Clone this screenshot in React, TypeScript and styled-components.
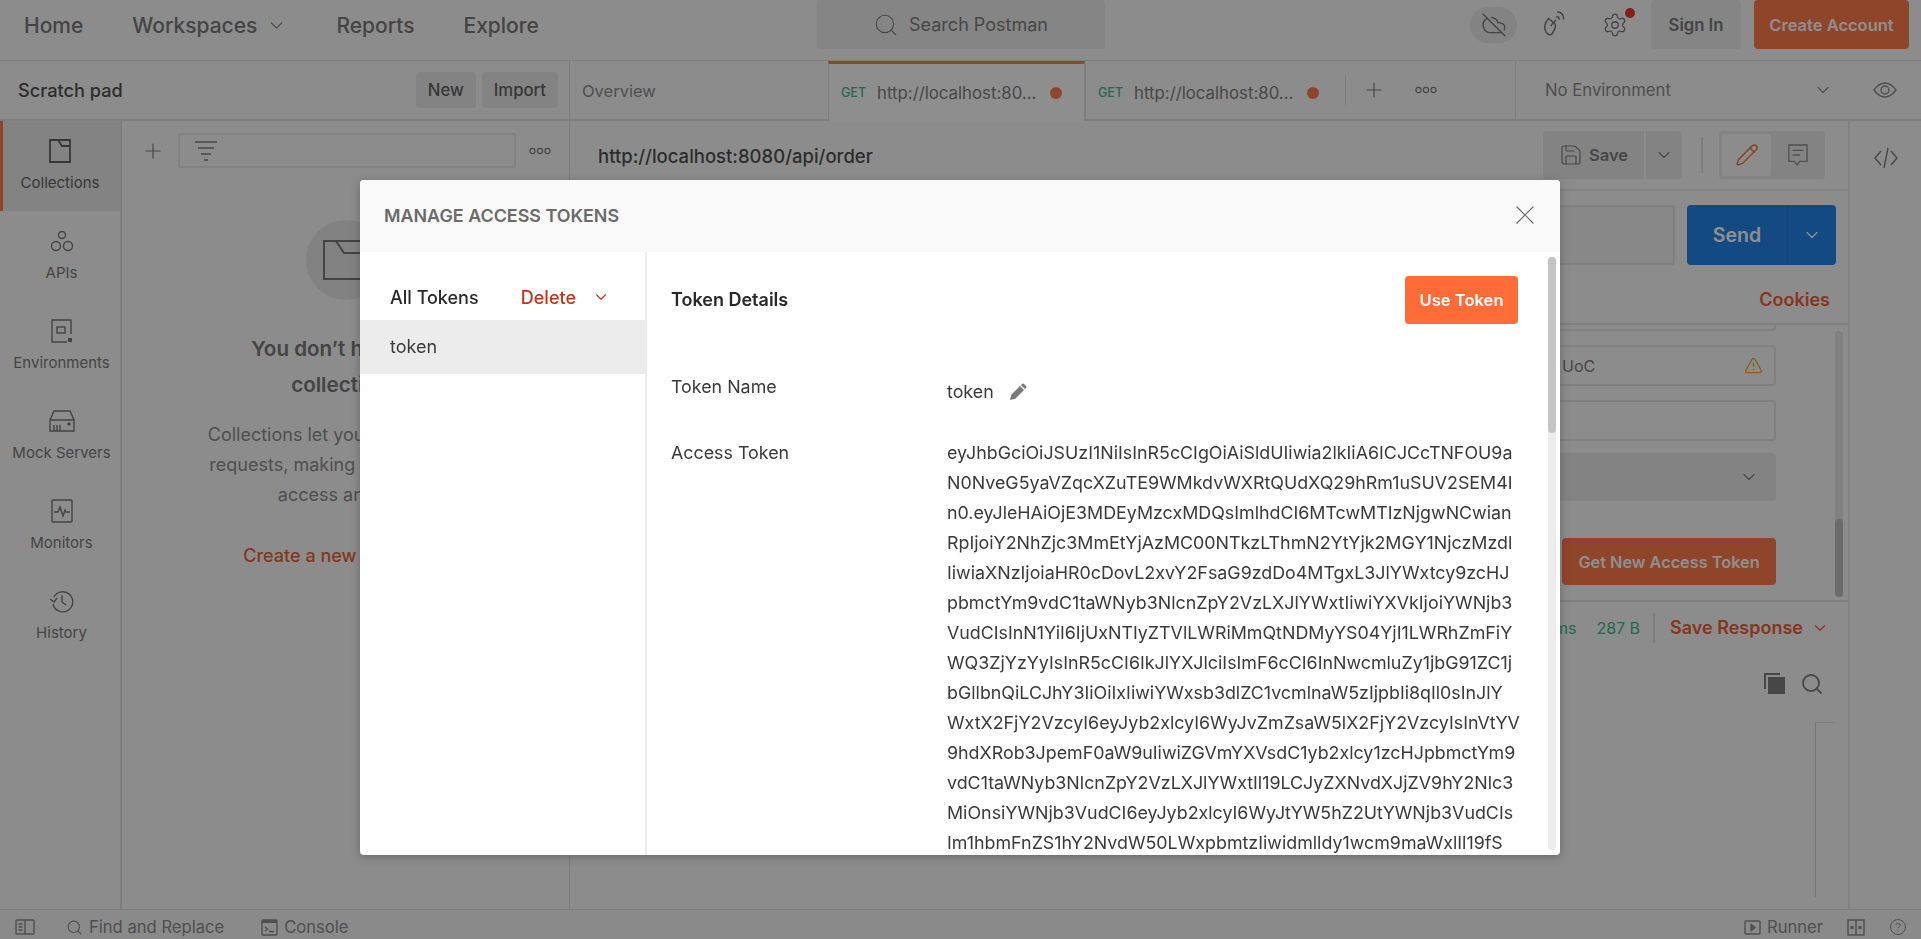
import React from 'react';
import styled, { createGlobalStyle } from 'styled-components';
import { ChevronDown, Plus, Search, X, CloudOff, Settings, Save, Pencil, TriangleAlert, CircleHelp } from 'lucide-react';

const GlobalStyle = createGlobalStyle`
  * { box-sizing: border-box; }
  html, body { margin: 0; padding: 0; height: 100%; overflow: hidden; }
  body { font-family: Inter, "Open Sans", sans-serif; background: #fafafa; color: #3a3a3a; }
`;

const TOKEN_LINES = [
  'eyJhbGciOiJSUzI1NiIsInR5cCIgOiAiSldUIiwia2lkIiA6ICJCcTNFOU9a',
  'N0NveG5yaVZqcXZuTE9WMkdvWXRtQUdXQ29hRm1uSUV2SEM4I',
  'n0.eyJleHAiOjE3MDEyMzcxMDQsImlhdCI6MTcwMTIzNjgwNCwian',
  'RpIjoiY2NhZjc3MmEtYjAzMC00NTkzLThmN2YtYjk2MGY1NjczMzdl',
  'IiwiaXNzIjoiaHR0cDovL2xvY2FsaG9zdDo4MTgxL3JlYWxtcy9zcHJ',
  'pbmctYm9vdC1taWNyb3NlcnZpY2VzLXJlYWxtIiwiYXVkIjoiYWNjb3',
  'VudCIsInN1YiI6IjUxNTIyZTVlLWRiMmQtNDMyYS04YjI1LWRhZmFiY',
  'WQ3ZjYzYyIsInR5cCI6IkJlYXJlciIsImF6cCI6InNwcmluZy1jbG91ZC1j',
  'bGllbnQiLCJhY3IiOiIxIiwiYWxsb3dlZC1vcmlnaW5zIjpbIi8qIl0sInJlY',
  'WxtX2FjY2VzcyI6eyJyb2xlcyI6WyJvZmZsaW5lX2FjY2VzcyIsInVtYV',
  '9hdXRob3JpemF0aW9uIiwiZGVmYXVsdC1yb2xlcy1zcHJpbmctYm9',
  'vdC1taWNyb3NlcnZpY2VzLXJlYWxtIl19LCJyZXNvdXJjZV9hY2Nlc3',
  'MiOnsiYWNjb3VudCI6eyJyb2xlcyI6WyJtYW5hZ2UtYWNjb3VudCIs',
  'Im1hbmFnZS1hY2NvdW50LWxpbmtzIiwidmlldy1wcm9maWxlIl19fS',
];

const Shell = styled.div`
  display: flex;
  flex-direction: column;
  height: 100vh;
  overflow: hidden;
`;

const TopBar = styled.header`
  height: 61px;
  flex: none;
  display: grid;
  grid-template-columns: 1fr 288px 1fr;
  border-bottom: 1px solid #dedede;
  background: #fbfbfb;
`;

const Nav = styled.nav`
  display: flex;
  align-items: center;
  gap: 49px;
  padding-left: 24px;
  height: 50px;
`;

const NavItem = styled.span`
  display: flex;
  align-items: center;
  gap: 9px;
  font-size: 21px;
  font-weight: 500;
  color: #6a6a6a;
`;

const SearchBox = styled.div`
  height: 49px;
  display: flex;
  align-items: center;
  justify-content: center;
  gap: 10px;
  border-radius: 4px;
  background: #ececec;
  color: #707070;
  font-size: 18px;
`;

const TopRight = styled.div`
  display: flex;
  align-items: flex-start;
  justify-content: flex-end;
  padding-right: 12px;
  color: #6a6a6a;
`;

const CloudPill = styled.div`
  width: 47px;
  height: 36px;
  margin-top: 7px;
  margin-right: 8px;
  border-radius: 18px;
  background: #e8e8e8;
  display: flex;
  align-items: center;
  justify-content: center;
`;

const TopIcon = styled.div`
  position: relative;
  width: 60px;
  height: 50px;
  display: flex;
  align-items: center;
  justify-content: center;
`;

const Dot = styled.span`
  position: absolute;
  top: 8px;
  right: 10px;
  width: 10px;
  height: 10px;
  border-radius: 50%;
  background: #eb2013;
`;

const SignIn = styled.div`
  width: 90px;
  height: 49px;
  margin: 0 13px 0 6px;
  border-radius: 4px;
  background: #ececec;
  display: flex;
  align-items: center;
  justify-content: center;
  font-size: 16.7px;
  font-weight: 600;
  color: #6a6a6a;
`;

const CreateAccount = styled.div`
  width: 155px;
  height: 49px;
  border-radius: 4px;
  background: #ff6c37;
  display: flex;
  align-items: center;
  justify-content: center;
  font-size: 16.5px;
  font-weight: 600;
  color: #fff;
`;

const Main = styled.div`
  flex: 1;
  min-height: 0;
  display: flex;
`;

const LeftPane = styled.section`
  width: 570px;
  flex: none;
  display: flex;
  flex-direction: column;
  border-right: 1px solid #dedede;
`;

const ScratchRow = styled.div`
  height: 60px;
  flex: none;
  display: flex;
  align-items: center;
  justify-content: space-between;
  padding: 0 11px 0 18px;
  border-bottom: 2px solid #dedede;
`;

const ScratchTitle = styled.span`
  font-size: 18.2px;
  font-weight: 500;
  color: #3a3a3a;
`;

const ScratchActions = styled.div`
  display: flex;
  gap: 6px;
`;

const SmallButton = styled.span`
  height: 36px;
  display: flex;
  align-items: center;
  padding: 0 12px;
  border-radius: 4px;
  background: #e8e8e8;
  font-size: 16.7px;
  font-weight: 500;
  color: #505050;
`;

const LeftBody = styled.div`
  flex: 1;
  min-height: 0;
  display: flex;
`;

const Rail = styled.aside`
  width: 122px;
  flex: none;
  border-right: 2px solid #dedede;
`;

const RailItem = styled.div<{ $active?: boolean }>`
  height: 90px;
  display: flex;
  flex-direction: column;
  align-items: center;
  padding-top: 17px;
  gap: 9px;
  font-size: 15px;
  color: ${p => (p.$active ? '#505050' : '#6a6a6a')};
  background: ${p => (p.$active ? '#e8e8e8' : 'transparent')};
  border-left: 3px solid ${p => (p.$active ? '#ff6c37' : 'transparent')};
  padding-right: ${p => (p.$active ? '3px' : '0')};
`;

const RailIcon = styled.span`
  height: 26px;
  display: flex;
  align-items: center;
`;

const CollectionsPane = styled.div`
  flex: 1;
  min-width: 0;
  display: flex;
  flex-direction: column;
`;

const FilterRow = styled.div`
  display: flex;
  align-items: center;
  padding: 12px 18px 0 19px;
  gap: 13px;
  color: #707070;
`;

const FilterInput = styled.div`
  flex: 1;
  height: 35px;
  border: 2px solid #e6e6e6;
  border-radius: 3px;
  padding-left: 14px;
  display: flex;
  align-items: center;
`;

const EmptyState = styled.div`
  display: flex;
  flex-direction: column;
  align-items: center;
  margin-top: 52px;
  text-align: center;
`;

const EmptyCircle = styled.div`
  width: 80px;
  height: 80px;
  border-radius: 50%;
  background: #e6e6e6;
  display: flex;
  align-items: center;
  justify-content: center;
  color: #6a6a6a;
`;

const EmptyTitle = styled.h2`
  margin: 31px 0 0;
  font-size: 20.6px;
  line-height: 36px;
  font-weight: 600;
  color: #6a6a6a;
`;

const EmptyText = styled.p`
  margin: 17px 0 0;
  font-size: 18px;
  line-height: 30px;
  color: #808080;
`;

const CreateLink = styled.span`
  margin-top: 35px;
  font-size: 18px;
  font-weight: 500;
  color: #ee4e1c;
`;

const RightPane = styled.section`
  flex: 1;
  min-width: 0;
  display: flex;
  flex-direction: column;
`;

const TabsRow = styled.div`
  height: 60px;
  flex: none;
  display: flex;
  border-bottom: 2px solid #dedede;
`;

const OverviewTab = styled.div`
  width: 258px;
  flex: none;
  padding: 2px 0 0 12px;
  display: flex;
  align-items: center;
  font-size: 16.5px;
  color: #808080;
`;

const RequestTab = styled.div<{ $active?: boolean }>`
  width: ${p => (p.$active ? '257px' : '260px')};
  height: 60px;
  flex: none;
  display: flex;
  align-items: center;
  gap: 11px;
  padding: 0 0 0 12px;
  font-size: 16.8px;
  color: #707070;
  background: ${p => (p.$active ? '#fff' : 'transparent')};
  border-top: 3px solid ${p => (p.$active ? '#ff6c37' : 'transparent')};
  border-left: 1px solid #dedede;
  border-right: ${p => (p.$active ? '1px solid #dedede' : '0')};
`;

const Method = styled.span`
  font-size: 12.5px;
  font-weight: 500;
  color: #26b47f;
`;

const UnsavedDot = styled.span`
  width: 12px;
  height: 12px;
  margin-left: 3px;
  border-radius: 50%;
  background: #ff6c37;
`;

const TabActions = styled.div`
  width: 170px;
  flex: none;
  display: flex;
  align-items: center;
  gap: 29px;
  padding-left: 16px;
  color: #707070;
  border-left: 1px solid #dedede;
  margin: 14px 0;
`;

const EnvSelect = styled.div`
  flex: 1;
  display: flex;
  align-items: center;
  padding: 0 24px 0 29px;
  font-size: 16.7px;
  color: #808080;
  border-left: 1px solid #dedede;
`;

const EnvLabel = styled.span`
  flex: 1;
`;

const EnvChevron = styled.span`
  display: flex;
  margin-right: 40px;
`;

const RightBody = styled.div`
  flex: 1;
  min-height: 0;
  display: flex;
`;

const RequestColumn = styled.div`
  flex: 1;
  min-width: 0;
  display: flex;
  flex-direction: column;
`;

const TitleRow = styled.div`
  height: 70px;
  flex: none;
  display: flex;
  align-items: center;
  padding: 0 23px 0 28px;
  border-bottom: 2px solid #e6e6e6;
`;

const RequestName = styled.span`
  flex: 1;
  padding-top: 2px;
  font-size: 18.5px;
  font-weight: 500;
  color: #3a3a3a;
`;

const SaveButton = styled.div`
  width: 101px;
  height: 48px;
  display: flex;
  align-items: center;
  justify-content: center;
  gap: 6px;
  border-radius: 4px 0 0 4px;
  background: #e8e8e8;
  font-size: 16.5px;
  font-weight: 600;
  color: #707070;
`;

const SaveMenu = styled.div`
  width: 36px;
  height: 48px;
  margin-left: 2px;
  display: flex;
  align-items: center;
  justify-content: center;
  border-radius: 0 4px 4px 0;
  background: #e8e8e8;
  color: #707070;
`;

const TitleDivider = styled.span`
  width: 2px;
  height: 36px;
  margin: 0 16px 0 19px;
  background: #dedede;
`;

const Toggle = styled.div`
  width: 106px;
  height: 48px;
  display: flex;
  align-items: center;
  justify-content: space-between;
  padding: 0 17px 0 3px;
  border-radius: 4px;
  background: #e8e8e8;
  color: #808080;
`;

const ToggleActive = styled.span`
  width: 49px;
  height: 42px;
  display: flex;
  align-items: center;
  justify-content: center;
  border-radius: 3px;
  background: #fbfbfb;
  color: #f15a24;
`;

const UrlRow = styled.div`
  flex: none;
  display: flex;
  justify-content: flex-end;
  gap: 12px;
  padding: 14px 12px 0 0;
`;

const UrlInput = styled.div`
  width: 300px;
  height: 60px;
  border: 2px solid #e2e2e2;
  border-radius: 3px;
  background: #f2f2f2;
`;

const SendButton = styled.div`
  width: 149px;
  height: 60px;
  display: flex;
  align-items: center;
  border-radius: 4px;
  background: #0b76e6;
  color: #fff;
`;

const SendLabel = styled.span`
  width: 101px;
  height: 100%;
  display: flex;
  align-items: center;
  justify-content: center;
  font-size: 19.5px;
  font-weight: 600;
  border-right: 1px solid #0a68cc;
`;

const SendChevron = styled.span`
  flex: 1;
  display: flex;
  justify-content: center;
`;

const CookiesRow = styled.div`
  height: 60px;
  flex: none;
  display: flex;
  align-items: flex-end;
  justify-content: flex-end;
  padding: 0 18px 13px 0;
  border-bottom: 2px solid #e0e0e0;
  font-size: 18px;
  font-weight: 600;
  color: #ee4e1c;
`;

const AuthPane = styled.div`
  position: relative;
  height: 277px;
  flex: none;
  display: flex;
  flex-direction: column;
  align-items: flex-end;
  padding-right: 72px;
  border-bottom: 2px solid #e0e0e0;
`;

const FieldStub = styled.div`
  width: 300px;
  height: 6px;
  border: 2px solid #e2e2e2;
  border-top: 0;
  border-radius: 0 0 4px 4px;
`;

const Field = styled.div<{ $filled?: boolean }>`
  width: 300px;
  height: ${p => (p.$filled ? '48px' : '41px')};
  margin-top: ${p => (p.$filled ? '12px' : '14px')};
  display: flex;
  align-items: center;
  justify-content: space-between;
  padding: 0 ${p => (p.$filled ? '17px' : '11px')} 0 ${p => (p.$filled ? '17px' : '84px')};
  border: ${p => (p.$filled ? '0' : '2px solid #e2e2e2')};
  border-radius: 4px;
  background: ${p => (p.$filled ? '#e8e8e8' : 'transparent')};
  font-size: 16px;
  color: #707070;
`;

const WarnIcon = styled.span`
  display: flex;
  color: #f0a010;
`;

const TokenButton = styled.div`
  width: 214px;
  height: 47px;
  margin-top: 37px;
  display: flex;
  align-items: center;
  justify-content: center;
  border-radius: 4px;
  background: #ff6c37;
  color: #fff;
  font-size: 16.3px;
  font-weight: 600;
`;

const ScrollTrack = styled.div`
  position: absolute;
  top: 6px;
  right: 5px;
  bottom: 3px;
  width: 8px;
  border-radius: 4px;
  background: #e4e4e4;
`;

const ScrollThumb = styled.div`
  position: absolute;
  left: 0;
  right: 0;
  bottom: 0;
  height: 78px;
  border-radius: 4px;
  background: #b8b8b8;
`;

const StatusRow = styled.div`
  height: 47px;
  flex: none;
  display: flex;
  align-items: center;
  justify-content: flex-end;
  padding: 4px 19px 0 0;
  font-size: 16px;
`;

const StatusValue = styled.span`
  color: #26b47f;
  margin-right: 20px;
`;

const StatusDivider = styled.span`
  width: 2px;
  height: 30px;
  margin: 0 15px 0 -7px;
  background: #e0e0e0;
`;

const SaveResponse = styled.span`
  display: flex;
  align-items: center;
  gap: 8px;
  font-size: 18px;
  font-weight: 600;
  color: #ee4e1c;
`;

const ResponseTools = styled.div`
  flex: none;
  display: flex;
  justify-content: flex-end;
  gap: 15px;
  padding: 23px 24px 0 0;
  color: #707070;
`;

const ResponseBody = styled.div`
  flex: 1;
  display: flex;
  justify-content: flex-end;
  padding: 26px 13px 12px 0;
`;

const ResponseGutter = styled.div`
  width: 20px;
  border-left: 1px solid #cfcfcf;
  border-top: 1px solid #e0e0e0;
`;

const CodeRail = styled.aside`
  width: 73px;
  flex: none;
  display: flex;
  justify-content: center;
  padding-top: 24px;
  border-left: 2px solid #e6e6e6;
  color: #707070;
`;

const BottomBar = styled.footer`
  height: 30px;
  flex: none;
  display: flex;
  align-items: center;
  padding: 5px 14px 0 15px;
  border-top: 1px solid #dedede;
  background: #f6f6f6;
  font-size: 16.6px;
  color: #808080;
`;

const BottomItem = styled.span<{ $gap?: number }>`
  display: flex;
  align-items: center;
  gap: 6px;
  margin-left: ${p => p.$gap ?? 0}px;
`;

const Spacer = styled.span`
  flex: 1;
`;

/* Modal */
const Overlay = styled.div`
  position: fixed;
  inset: 0;
  display: flex;
  justify-content: center;
  padding: 180px 1px 0 0;
  background: rgba(30, 30, 30, 0.5);
`;

const Modal = styled.div`
  width: 1200px;
  height: 675px;
  display: flex;
  flex-direction: column;
  overflow: hidden;
  border-radius: 4px;
  background: #fff;
  box-shadow: 0 2px 10px rgba(0, 0, 0, 0.25);
`;

const ModalHeader = styled.div`
  height: 72px;
  flex: none;
  display: flex;
  align-items: center;
  justify-content: space-between;
  padding: 0 19px 2px 24px;
  background: #f9f9f9;
`;

const ModalTitle = styled.h1`
  margin: 0;
  font-size: 17.9px;
  font-weight: 600;
  color: #6b6b6b;
`;

const CloseIcon = styled.span`
  display: flex;
  color: #6b6b6b;
`;

const ModalBody = styled.div`
  position: relative;
  flex: 1;
  min-height: 0;
  display: flex;
`;

const TokenList = styled.div`
  width: 287px;
  flex: none;
  border-right: 2px solid #ececec;
`;

const ListHeader = styled.div`
  height: 68px;
  display: flex;
  align-items: center;
  justify-content: space-between;
  padding: 22px 35px 0 30px;
`;

const ListTitle = styled.span`
  font-size: 18px;
  font-weight: 500;
  color: #282828;
`;

const DeleteAction = styled.span`
  display: flex;
  align-items: center;
  gap: 16px;
  font-size: 18px;
  font-weight: 500;
  color: #c8301a;
`;

const ListRow = styled.div`
  height: 54px;
  display: flex;
  align-items: center;
  padding: 0 0 2px 30px;
  background: #ececec;
  font-size: 18px;
  color: #3a3a3a;
`;

const Details = styled.div`
  flex: 1;
  min-width: 0;
  padding: 24px 42px 0 24px;
  overflow: hidden;
`;

const DetailsHead = styled.div`
  display: flex;
  align-items: center;
  justify-content: space-between;
  height: 48px;
`;

const DetailsTitle = styled.h2`
  margin: 0 0 2px;
  font-size: 18px;
  font-weight: 600;
  color: #282828;
`;

const UseToken = styled.span`
  width: 113px;
  height: 48px;
  display: flex;
  align-items: center;
  justify-content: center;
  border-radius: 4px;
  background: #ff6c37;
  color: #fff;
  font-size: 16.6px;
  font-weight: 600;
`;

const DetailRow = styled.div<{ $top: number }>`
  display: grid;
  grid-template-columns: 276px 1fr;
  margin-top: ${p => p.$top}px;
  font-size: 17.85px;
  line-height: 30px;
  color: #3a3a3a;
`;

const NameValue = styled.span`
  display: flex;
  align-items: center;
  gap: 15px;
  padding-top: 5px;
`;

const PencilIcon = styled.span`
  display: flex;
  color: #7a7a7a;
`;

const TokenLine = styled.div`
  white-space: nowrap;
`;

const ModalTrack = styled.div`
  position: absolute;
  top: 5px;
  right: 4px;
  bottom: 5px;
  width: 8px;
  border-radius: 4px;
  background: #ececec;
`;

const ModalThumb = styled.div`
  height: 176px;
  border-radius: 4px;
  background: #c4c4c4;
`;

const Line = { fill: 'none', stroke: 'currentColor', strokeWidth: 1.4 } as const;

const CollectionsIcon = () => (
  <svg width="24" height="26" viewBox="0 0 24 26" {...Line} strokeWidth={1.8}>
    <path d="M2 2h20v22H2z" />
    <path d="M10 2l4 6h8" />
  </svg>
);
const ApisIcon = () => (
  <svg width="24" height="24" viewBox="0 0 24 24" {...Line}>
    <circle cx="12" cy="6" r="3.5" />
    <circle cx="6" cy="17" r="4.5" />
    <circle cx="18" cy="17" r="4.5" />
  </svg>
);
const EnvironmentsIcon = () => (
  <svg width="24" height="26" viewBox="0 0 24 26" {...Line}>
    <path d="M21 16V2H2v22h15" />
    <rect x="7" y="9" width="8" height="6" />
    <rect x="18" y="20" width="4" height="4" fill="currentColor" stroke="none" />
  </svg>
);
const MockIcon = () => (
  <svg width="26" height="24" viewBox="0 0 26 24" {...Line}>
    <path d="M1 11l4-9h16l4 9v11H1z" />
    <path d="M1 11h24M5 22v-6M8 22v-6M11 22v-6" />
    <circle cx="20" cy="15" r="1" fill="currentColor" />
  </svg>
);
const MonitorsIcon = () => (
  <svg width="24" height="26" viewBox="0 0 24 26" {...Line}>
    <rect x="2" y="2" width="20" height="22" rx="1" />
    <path d="M4 14h4l2-5 3 9 2-6 1 2h4" />
  </svg>
);
const HistoryIcon = () => (
  <svg width="26" height="26" viewBox="0 0 26 26" {...Line}>
    <path d="M5 9a10 10 0 1 1-1 7" />
    <path d="M1 11l4 3 3-4" />
    <path d="M13 7v7l4 3" />
  </svg>
);
const FolderIcon = () => (
  <svg width="48" height="42" viewBox="0 0 48 42" {...Line} strokeWidth={2}>
    <path d="M2 2h44v38H2z" />
    <path d="M14 2l8 12h24" />
  </svg>
);
const FilterIcon = () => (
  <svg width="24" height="22" viewBox="0 0 24 22" {...Line}>
    <path d="M1 2h22M4 8h16M7 14h10M10 20h4" />
  </svg>
);
const Dots = () => (
  <svg width="22" height="8" viewBox="0 0 22 8" {...Line} strokeWidth={1.1}>
    <circle cx="3.5" cy="4" r="2.6" />
    <circle cx="11" cy="4" r="2.6" />
    <circle cx="18.5" cy="4" r="2.6" />
  </svg>
);
const SatelliteIcon = () => (
  <svg width="26" height="28" viewBox="0 0 24 26" {...Line}>
    <path d="M6 7c-4 4-5 10-1 14 2 2 4 1 5-1 2-3 3-6 2-8z" />
    <path d="M8 14l5-6" />
    <path d="M13 5c2 0 3 1 3 3M14 1c4 0 6 3 6 7" />
  </svg>
);
const EyeIcon = () => (
  <svg width="24" height="16" viewBox="0 0 24 16" {...Line}>
    <path d="M1 8C5 2.500 8 1 12 1s7 1.500 11 7c-4 5.500-7 7-11 7S5 13.500 1 8z" />
    <circle cx="12" cy="8" r="4" />
  </svg>
);
const CodeIcon = () => (
  <svg width="26" height="26" viewBox="0 0 26 26" {...Line}>
    <path d="M8 6l-6 7 6 7M18 6l6 7-6 7M15 3l-4 20" />
  </svg>
);
const CommentIcon = () => (
  <svg width="20" height="24" viewBox="0 0 22 24" {...Line}>
    <path d="M1 1h20v18H13l-3 4-3-4H1z" />
    <path d="M5 7h12M5 12h8" />
  </svg>
);
const CopyIcon = () => (
  <svg width="22" height="22" viewBox="0 0 22 22">
    <path d="M1 1h16v2H3v14H1z" fill="currentColor" />
    <rect x="5" y="5" width="17" height="17" fill="currentColor" />
  </svg>
);
const BookIcon = () => (
  <svg width="20" height="16" viewBox="0 0 20 16" {...Line}>
    <rect x="1" y="1" width="18" height="14" rx="1" />
    <path d="M10 1v14M3.500 5h4M3.500 8h4M3.500 11h4" />
  </svg>
);
const ConsoleIcon = () => (
  <svg width="17" height="17" viewBox="0 0 17 17" {...Line}>
    <rect x="1" y="1" width="15" height="15" rx="1" />
    <path d="M1 2.500h15" strokeWidth={3} />
    <path d="M4 8l2.500 2L4 12M8 12.500h5" />
  </svg>
);
const RunnerIcon = () => (
  <svg width="17" height="15" viewBox="0 0 17 15" {...Line}>
    <rect x="1" y="1" width="15" height="13" rx="1" />
    <path d="M7 4.500l4 3-4 3z" fill="currentColor" />
  </svg>
);
const LayoutIcon = () => (
  <svg width="18" height="17" viewBox="0 0 18 17" {...Line}>
    <rect x="1" y="1" width="16" height="15" />
    <path d="M9 1v15" />
    <rect x="3.500" y="7" width="3" height="3" fill="currentColor" stroke="none" />
    <rect x="11.500" y="7" width="3" height="3" fill="currentColor" stroke="none" />
  </svg>
);
const SolidPencil = () => (
  <svg width="18" height="18" viewBox="0 0 18 18" fill="currentColor">
    <path d="M1 17l1.300-5.200L11 3l4 4-8.700 8.700z" />
    <path d="M12 2l1.300-1.200a1 1 0 0 1 1.400 0l2.500 2.500a1 1 0 0 1 0 1.400L16 6z" />
  </svg>
);

const RAIL_ITEMS = [
  { label: 'Collections', icon: <CollectionsIcon />, active: true },
  { label: 'APIs', icon: <ApisIcon /> },
  { label: 'Environments', icon: <EnvironmentsIcon /> },
  { label: 'Mock Servers', icon: <MockIcon /> },
  { label: 'Monitors', icon: <MonitorsIcon /> },
  { label: 'History', icon: <HistoryIcon /> },
];

export default function App() {
  return (
    <>
      <GlobalStyle />
      <Shell>
        <TopBar>
          <Nav>
            <NavItem>Home</NavItem>
            <NavItem>
              Workspaces <ChevronDown size={21} strokeWidth={1.2} />
            </NavItem>
            <NavItem>Reports</NavItem>
            <NavItem>Explore</NavItem>
          </Nav>
          <SearchBox>
            <Search size={26} strokeWidth={1} />
            Search Postman
          </SearchBox>
          <TopRight>
            <CloudPill>
              <CloudOff size={26} strokeWidth={1.3} />
            </CloudPill>
            <TopIcon>
              <SatelliteIcon />
            </TopIcon>
            <TopIcon>
              <Settings size={26} strokeWidth={1.2} />
              <Dot />
            </TopIcon>
            <SignIn>Sign In</SignIn>
            <CreateAccount>Create Account</CreateAccount>
          </TopRight>
        </TopBar>
        <Main>
          <LeftPane>
            <ScratchRow>
              <ScratchTitle>Scratch pad</ScratchTitle>
              <ScratchActions>
                <SmallButton>New</SmallButton>
                <SmallButton>Import</SmallButton>
              </ScratchActions>
            </ScratchRow>
            <LeftBody>
              <Rail>
                {RAIL_ITEMS.map(item => (
                  <RailItem key={item.label} $active={item.active}>
                    <RailIcon>{item.icon}</RailIcon>
                    {item.label}
                  </RailItem>
                ))}
              </Rail>
              <CollectionsPane>
                <FilterRow>
                  <Plus size={24} strokeWidth={1.2} />
                  <FilterInput>
                    <FilterIcon />
                  </FilterInput>
                  <Dots />
                </FilterRow>
                <EmptyState>
                  <EmptyCircle>
                    <FolderIcon />
                  </EmptyCircle>
                  <EmptyTitle>
                    You don’t have any
                    <br />
                    collections
                  </EmptyTitle>
                  <EmptyText>
                    Collections let you group related
                    <br />
                    requests, making them easier to
                    <br />
                    access and run.
                  </EmptyText>
                  <CreateLink>Create a new Collection</CreateLink>
                </EmptyState>
              </CollectionsPane>
            </LeftBody>
          </LeftPane>
          <RightPane>
            <TabsRow>
              <OverviewTab>Overview</OverviewTab>
              <RequestTab $active>
                <Method>GET</Method>
                http://localhost:80...
                <UnsavedDot />
              </RequestTab>
              <RequestTab>
                <Method>GET</Method>
                http://localhost:80...
                <UnsavedDot />
              </RequestTab>
              <TabActions>
                <Plus size={24} strokeWidth={1.2} />
                <Dots />
              </TabActions>
              <EnvSelect>
                <EnvLabel>No Environment</EnvLabel>
                <EnvChevron>
                  <ChevronDown size={20} strokeWidth={1.3} />
                </EnvChevron>
                <EyeIcon />
              </EnvSelect>
            </TabsRow>
            <RightBody>
              <RequestColumn>
                <TitleRow>
                  <RequestName>http://localhost:8080/api/order</RequestName>
                  <SaveButton>
                    <Save size={24} strokeWidth={1.2} />
                    Save
                  </SaveButton>
                  <SaveMenu>
                    <ChevronDown size={20} strokeWidth={1.3} />
                  </SaveMenu>
                  <TitleDivider />
                  <Toggle>
                    <ToggleActive>
                      <Pencil size={24} strokeWidth={1.3} />
                    </ToggleActive>
                    <CommentIcon />
                  </Toggle>
                </TitleRow>
                <UrlRow>
                  <UrlInput />
                  <SendButton>
                    <SendLabel>Send</SendLabel>
                    <SendChevron>
                      <ChevronDown size={20} strokeWidth={1.5} />
                    </SendChevron>
                  </SendButton>
                </UrlRow>
                <CookiesRow>Cookies</CookiesRow>
                <AuthPane>
                  <FieldStub />
                  <Field>
                    UoC
                    <WarnIcon>
                      <TriangleAlert size={19} strokeWidth={1.5} />
                    </WarnIcon>
                  </Field>
                  <Field />
                  <Field $filled>
                    <span />
                    <ChevronDown size={20} strokeWidth={1.3} />
                  </Field>
                  <TokenButton>Get New Access Token</TokenButton>
                  <ScrollTrack>
                    <ScrollThumb />
                  </ScrollTrack>
                </AuthPane>
                <StatusRow>
                  <StatusValue>ms</StatusValue>
                  <StatusValue>287 B</StatusValue>
                  <StatusDivider />
                  <SaveResponse>
                    Save Response
                    <ChevronDown size={18} strokeWidth={1.5} />
                  </SaveResponse>
                </StatusRow>
                <ResponseTools>
                  <CopyIcon />
                  <Search size={24} strokeWidth={1.8} />
                </ResponseTools>
                <ResponseBody>
                  <ResponseGutter />
                </ResponseBody>
              </RequestColumn>
              <CodeRail>
                <CodeIcon />
              </CodeRail>
            </RightBody>
          </RightPane>
        </Main>
        <BottomBar>
          <BottomItem>
            <BookIcon />
          </BottomItem>
          <BottomItem $gap={31}>
            <Search size={17} strokeWidth={1.6} />
            Find and Replace
          </BottomItem>
          <BottomItem $gap={37}>
            <ConsoleIcon />
            Console
          </BottomItem>
          <Spacer />
          <BottomItem>
            <RunnerIcon />
            Runner
          </BottomItem>
          <BottomItem $gap={24}>
            <LayoutIcon />
          </BottomItem>
          <BottomItem $gap={24}>
            <CircleHelp size={18} strokeWidth={1.3} />
          </BottomItem>
        </BottomBar>
      </Shell>
      <Overlay>
        <Modal>
          <ModalHeader>
            <ModalTitle>MANAGE ACCESS TOKENS</ModalTitle>
            <CloseIcon>
              <X size={32} strokeWidth={0.9} />
            </CloseIcon>
          </ModalHeader>
          <ModalBody>
            <TokenList>
              <ListHeader>
                <ListTitle>All Tokens</ListTitle>
                <DeleteAction>
                  Delete
                  <ChevronDown size={18} strokeWidth={1.5} />
                </DeleteAction>
              </ListHeader>
              <ListRow>token</ListRow>
            </TokenList>
            <Details>
              <DetailsHead>
                <DetailsTitle>Token Details</DetailsTitle>
                <UseToken>Use Token</UseToken>
              </DetailsHead>
              <DetailRow $top={48}>
                <span>Token Name</span>
                <NameValue>
                  token
                  <PencilIcon>
                    <SolidPencil />
                  </PencilIcon>
                </NameValue>
              </DetailRow>
              <DetailRow $top={31}>
                <span>Access Token</span>
                <div>
                  {TOKEN_LINES.map(line => (
                    <TokenLine key={line}>{line}</TokenLine>
                  ))}
                </div>
              </DetailRow>
            </Details>
            <ModalTrack>
              <ModalThumb />
            </ModalTrack>
          </ModalBody>
        </Modal>
      </Overlay>
    </>
  );
}
